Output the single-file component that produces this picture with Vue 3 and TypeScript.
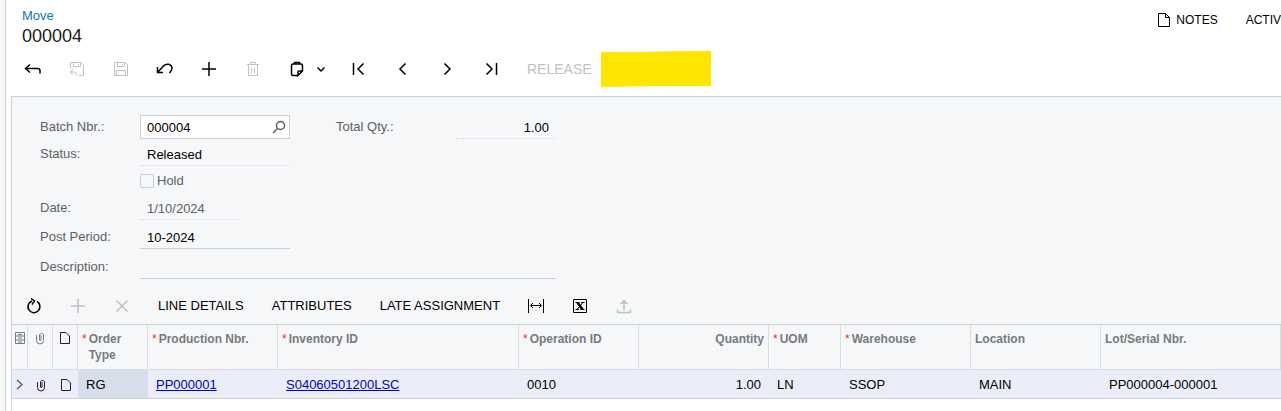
<script setup lang="ts">
import { ref } from 'vue'

interface IconButton {
  label: string
  icon: string
  disabled?: boolean
}

interface Column {
  key: string
  title: string
  required?: boolean
  numeric?: boolean
  link?: boolean
}

const icons: Record<string, string> = {
  back: 'M7 5.500 2.500 9.500 7 13.500M2.500 9.500H14q3 0 3 2v3',
  undo: 'M2.500 8v5.500H8M2.500 13.500 8 7.500c3-4 9-2.500 9 2 0 2-1.500 3-2.500 4.500',
  plus: 'M10 3v14M3 10h14',
  trash: 'M4 5.500h12M7.500 5V3.500h5V5M5.500 6v10.500h9V6M8.500 8.500v6M11.500 8.500v6',
  save: 'M3.500 3.500H14l2.500 2.500v10.500h-13zM6.500 3.500v4h7v-4M11.500 5v1M5.500 16v-4.500h9V16',
  saveClose: 'M3.500 9.500v-6H14l2.500 2.500v10.500H12M6.500 3.500v4h7v-4M11.500 5v1M6 10.500 3 13l3 2.500M3.500 13h4q2 0 2 3.500',
  first: 'M4.500 4v12M14.500 4.500 9 10l5.500 5.500',
  previous: 'M12.500 4.500 7 10l5.500 5.500',
  next: 'M7.500 4.500 13 10l-5.500 5.500',
  last: 'M15.500 4v12M5.500 4.500 11 10l-5.500 5.500',
}

const recordActions: IconButton[] = [
  { label: 'Back', icon: 'back' },
  { label: 'Save and close', icon: 'saveClose', disabled: true },
  { label: 'Save', icon: 'save', disabled: true },
  { label: 'Undo', icon: 'undo' },
  { label: 'Add record', icon: 'plus' },
  { label: 'Delete', icon: 'trash', disabled: true },
]

const navActions: IconButton[] = [
  { label: 'First', icon: 'first' },
  { label: 'Previous', icon: 'previous' },
  { label: 'Next', icon: 'next' },
  { label: 'Last', icon: 'last' },
]

const columns: Column[] = [
  { key: 'orderType', title: 'Order Type', required: true },
  { key: 'production', title: 'Production Nbr.', required: true, link: true },
  { key: 'inventory', title: 'Inventory ID', required: true, link: true },
  { key: 'operation', title: 'Operation ID', required: true },
  { key: 'quantity', title: 'Quantity', numeric: true },
  { key: 'uom', title: 'UOM', required: true },
  { key: 'warehouse', title: 'Warehouse', required: true },
  { key: 'location', title: 'Location' },
  { key: 'lot', title: 'Lot/Serial Nbr.' },
]

const rows: Record<string, string>[] = [
  {
    orderType: 'RG',
    production: 'PP000001',
    inventory: 'S04060501200LSC',
    operation: '0010',
    quantity: '1.00',
    uom: 'LN',
    warehouse: 'SSOP',
    location: 'MAIN',
    lot: 'PP000004-000001',
  },
]

const batch = ref('000004')
const postPeriod = ref('10-2024')
const description = ref('')
</script>

<template>
  <div class="shell">
    <main class="screen">
      <header class="header">
        <div>
          <a class="crumb" href="#">Move</a>
          <h1 class="title">000004</h1>
        </div>
        <nav class="tools">
          <button type="button" class="tool notes">
            <svg width="14" height="16" viewBox="0 0 14 16"><path d="M1.500 1.500h7l4 4v9h-11zM8.500 1.500v4h4" /></svg>
            NOTES
          </button>
          <button type="button" class="tool">ACTIV</button>
        </nav>
      </header>

      <div class="toolbar">
        <button v-for="a in recordActions" :key="a.label" type="button" class="icon-btn" :aria-label="a.label" :disabled="a.disabled">
          <svg width="20" height="20" viewBox="0 0 20 20" :class="{ heavy: !a.disabled }"><path :d="icons[a.icon]" /></svg>
        </button>
        <button type="button" class="icon-btn clipboard" aria-label="Clipboard">
          <svg width="20" height="20" viewBox="0 0 20 20" class="heavy">
            <path d="M11 16.500H6q-1.500 0-1.500-1.500V6.500Q4.500 5 6 5h8q1.500 0 1.500 1.500V12L11 16.500V13q0-1 1-1h3.500" />
            <path d="M7.500 5V3.500h5V5" />
          </svg>
          <svg width="10" height="20" viewBox="0 0 10 20" class="heavy"><path d="M1.500 8.500 5 12l3.500-3.500" /></svg>
        </button>
        <button v-for="a in navActions" :key="a.label" type="button" class="icon-btn" :aria-label="a.label">
          <svg width="20" height="20" viewBox="0 0 20 20" class="heavy"><path :d="icons[a.icon]" /></svg>
        </button>
        <button type="button" class="release" disabled>RELEASE</button>
        <svg class="marker" width="110" height="36" viewBox="0 0 110 36" aria-hidden="true">
          <path d="M0 1 40 1 75 0H110V35L60 35 0 36z" />
        </svg>
      </div>

      <section class="panel">
        <form class="form" @submit.prevent>
          <div class="columns">
            <div class="column">
              <div class="row">
                <label for="batch">Batch Nbr.:</label>
                <div class="lookup">
                  <input id="batch" v-model="batch" type="text" />
                  <button type="button" aria-label="Find batch">
                    <svg width="14" height="14" viewBox="0 0 14 14"><circle cx="8.500" cy="5.500" r="4" /><path d="M5.500 8.500 1 13" /></svg>
                  </button>
                </div>
              </div>
              <div class="row">
                <label for="status">Status:</label>
                <input id="status" class="field dotted" type="text" value="Released" readonly />
              </div>
              <div class="row hold">
                <input id="hold" type="checkbox" disabled />
                <label for="hold">Hold</label>
              </div>
              <div class="row">
                <label for="date">Date:</label>
                <input id="date" class="field dotted short muted" type="text" value="1/10/2024" readonly />
              </div>
              <div class="row spaced">
                <label for="period">Post Period:</label>
                <input id="period" v-model="postPeriod" class="field" type="text" />
              </div>
            </div>
            <div class="column">
              <div class="row total">
                <label for="total">Total Qty.:</label>
                <input id="total" class="field dotted short numeric" type="text" value="1.00" readonly />
              </div>
            </div>
          </div>
          <div class="row wide">
            <label for="description">Description:</label>
            <input id="description" v-model="description" class="field" type="text" />
          </div>
        </form>

        <div class="grid-toolbar">
          <button type="button" class="icon-btn" aria-label="Refresh">
            <svg width="20" height="20" viewBox="0 0 20 20" class="heavy"><path d="M8 5a6 6 0 1 0 5 .5M7 2.500 10.500 5 8 8.500" /></svg>
          </button>
          <button type="button" class="icon-btn" aria-label="Add row" disabled>
            <svg width="20" height="20" viewBox="0 0 20 20" class="heavy"><path :d="icons.plus" /></svg>
          </button>
          <button type="button" class="icon-btn" aria-label="Delete row" disabled>
            <svg width="20" height="20" viewBox="0 0 20 20" class="heavy"><path d="m4.500 4.500 11 11m0-11-11 11" /></svg>
          </button>
          <button type="button" class="text-btn">LINE DETAILS</button>
          <button type="button" class="text-btn">ATTRIBUTES</button>
          <button type="button" class="text-btn">LATE ASSIGNMENT</button>
          <button type="button" class="icon-btn" aria-label="Fit columns">
            <svg width="20" height="20" viewBox="0 0 20 20"><path d="M2.500 3v14M17.500 3v14M5 9.500h10M7 7 4.500 9.500 7 12M13 7l2.500 2.500L13 12" /></svg>
          </button>
          <button type="button" class="icon-btn" aria-label="Export to Excel">
            <svg width="20" height="20" viewBox="0 0 20 20">
              <path d="M3.500 3.500h13v13h-13zM5.500 6.500h4M11 6.500h3.500M5.500 13.500H9M10.500 13.500h4M13 6.500l-6 7" />
              <path class="solid" d="M6.500 6.500h2l5 7h-2z" />
            </svg>
          </button>
          <button type="button" class="icon-btn" aria-label="Upload" disabled>
            <svg width="20" height="20" viewBox="0 0 20 20" class="heavy"><path d="M3.500 13.500v3h13v-3M10 14V5" /><path class="solid" d="m7.500 7 2.500-2.500L12.500 7z" /></svg>
          </button>
        </div>

        <table class="grid">
          <colgroup>
            <col class="w-mark" /><col class="w-icon" /><col class="w-icon" />
            <col v-for="c in columns" :key="c.key" :class="'w-' + c.key" />
          </colgroup>
          <thead>
            <tr>
              <th class="glyph" scope="col" aria-label="Row settings">
                <svg width="12" height="14" viewBox="0 0 12 14"><path d="M1.500 1.500h9v11h-9zM1 5h10M1 9h10M4 3.500h4M4 7h4M4 11h4" /></svg>
              </th>
              <th class="glyph" scope="col" aria-label="Files">
                <svg width="10" height="14" viewBox="0 0 10 14"><path d="M1.500 4v5.500a3.500 3.500 0 0 0 7 0V3.500a2.500 2.500 0 0 0-4 0v5.500q.5 1.500 1.500 0V4" /></svg>
              </th>
              <th class="glyph dark" scope="col" aria-label="Notes">
                <svg width="12" height="14" viewBox="0 0 12 14"><path d="M1.500 1.500H7l3.500 3.500v7.500h-9z" /></svg>
              </th>
              <th v-for="c in columns" :key="c.key" scope="col">
                <div class="head" :class="{ required: c.required, numeric: c.numeric }">
                  <span v-if="c.required" class="star">*</span>
                  <span>{{ c.title }}</span>
                </div>
              </th>
            </tr>
          </thead>
          <tbody>
            <tr v-for="r in rows" :key="r.production">
              <td class="glyph">
                <button type="button" aria-label="Select row">
                  <svg width="10" height="14" viewBox="0 0 10 14" class="heavy"><path d="m2 2 5 4.500L2 11" /></svg>
                </button>
              </td>
              <td class="glyph dark">
                <button type="button" aria-label="Row files">
                  <svg width="10" height="14" viewBox="0 0 10 14"><path d="M1.500 4v5.500a3.500 3.500 0 0 0 7 0V3.500a2.500 2.500 0 0 0-4 0v5.500q.5 1.500 1.500 0V4" /></svg>
                </button>
              </td>
              <td class="glyph dark">
                <button type="button" aria-label="Row notes">
                  <svg width="12" height="14" viewBox="0 0 12 14"><path d="M1.500 1.500H7l3.500 3.500v7.500h-9z" /></svg>
                </button>
              </td>
              <td v-for="(c, i) in columns" :key="c.key" :class="{ numeric: c.numeric, active: i === 0 }">
                <a v-if="c.link" href="#">{{ r[c.key] }}</a>
                <template v-else>{{ r[c.key] }}</template>
              </td>
            </tr>
          </tbody>
        </table>
      </section>
    </main>
  </div>
</template>

<style>
body {
  background: #fff;
}
</style>

<style scoped>
* {
  box-sizing: border-box;
}
.shell {
  display: flex;
  min-height: 100vh;
  padding-left: 5px;
  overflow: hidden;
  background: #f5f6f8;
  color: #000;
  font: 13px/16px "Liberation Sans", Arial, sans-serif;
}
.screen {
  display: flex;
  flex-direction: column;
  flex: 1;
  min-width: 0;
  padding-left: 5px;
  border-left: 1px solid #cdd0d5;
  background: #fff;
}
button,
input {
  margin: 0;
  padding: 0;
  border: 0;
  background: none;
  color: inherit;
  font: inherit;
}
svg {
  display: block;
  fill: none;
  stroke: currentColor;
  stroke-width: 1;
}
svg.heavy {
  stroke-width: 1.5;
}
.solid {
  fill: currentColor;
}
.header {
  display: flex;
  justify-content: space-between;
  padding: 7px 0 0 11px;
}
.crumb {
  display: block;
  padding-top: 1px;
  color: #0f75bd;
  text-decoration: none;
}
.title {
  margin: 0;
  color: #1a1a1a;
  font-size: 18px;
  font-weight: 400;
  line-height: 25px;
}
.tools {
  display: flex;
  align-items: flex-start;
  gap: 28px;
  padding-top: 5px;
  font-size: 12px;
}
.tool {
  display: flex;
  align-items: center;
  gap: 5px;
}
.toolbar {
  display: flex;
  align-items: center;
  height: 40px;
  margin-bottom: 7px;
}
.icon-btn {
  display: flex;
  flex: none;
  align-items: center;
  justify-content: center;
  width: 44px;
  height: 36px;
}
.icon-btn:disabled {
  color: #bfc1c3;
}
.clipboard {
  justify-content: flex-start;
  gap: 9px;
  width: 62px;
  padding-left: 12px;
}
.release {
  padding: 0 9px 0 14px;
  color: #bfc1c3;
  font-size: 14px;
}
.marker {
  fill: #ffe600;
  stroke: none;
}
.panel {
  flex: 1;
  border-top: 1px solid #cdd0d5;
  border-left: 1px solid #cdd0d5;
}
.form {
  padding: 18px 28px 9px;
  background: #f5f7f9;
  color: #5c6166;
}
.columns {
  display: flex;
  gap: 46px;
}
.column {
  display: flex;
  flex-direction: column;
  gap: 3px;
}
.row {
  display: grid;
  grid-template-columns: 100px 150px;
  align-items: center;
  height: 24px;
}
.row.total {
  grid-template-columns: 120px 100px;
}
.row.spaced {
  margin-top: 2px;
}
.row.wide {
  grid-template-columns: 100px 416px;
  margin-top: 6px;
}
.row.hold {
  display: flex;
  gap: 3px;
  padding-left: 100px;
}
.hold input {
  appearance: none;
  width: 14px;
  height: 14px;
  border: 1px solid #c9ccd0;
  border-radius: 2px;
}
.field {
  width: 100%;
  height: 24px;
  padding: 1px 7px 0;
  border-bottom: 1px solid #cdd0d5;
  color: #000;
}
.field.dotted {
  border-bottom: 1px dotted #d5d8dc;
}
.field.short {
  width: 100px;
}
.field.muted {
  color: #5c6166;
}
.numeric {
  text-align: right;
}
.lookup {
  display: flex;
  align-items: center;
  height: 24px;
  padding: 0 3px 0 6px;
  border: 1px solid #cdd0d5;
  background: #fff;
}
.lookup input {
  flex: 1;
  min-width: 0;
  padding-top: 1px;
  color: #000;
}
.lookup svg {
  stroke-width: 1.5;
}
.grid-toolbar {
  display: flex;
  align-items: center;
  height: 36px;
  background: #f5f7f9;
}
.text-btn {
  padding: 0 14px;
  white-space: nowrap;
}
.grid {
  width: 100%;
  border-top: 1px solid #cdd0d5;
  border-collapse: separate;
  border-spacing: 0;
  table-layout: fixed;
}
.w-mark { width: 16px; }
.w-icon { width: 25px; }
.w-orderType { width: 70px; }
.w-production, .w-quantity, .w-warehouse, .w-location { width: 130px; }
.w-inventory { width: 241px; }
.w-operation { width: 120px; }
.w-uom { width: 72px; }
th {
  height: 45px;
  padding: 6px 4px 0;
  border-right: 1px solid #d9dce1;
  border-bottom: 1px solid #d9dce1;
  background: #f5f7f9;
  color: #777b7f;
  font-size: 12px;
  text-align: left;
  vertical-align: top;
}
.head {
  display: flex;
  gap: 2px;
}
.head.numeric {
  justify-content: flex-end;
}
.star {
  color: #e8351e;
  font-weight: 400;
}
td {
  height: 29px;
  padding: 1px 8px 0;
  border-bottom: 1px solid #cdd0d5;
  background: #ebeef9;
  white-space: nowrap;
}
td.active {
  background: #d6deec;
}
td a {
  color: #0000c8;
}
.glyph {
  padding-right: 0;
  padding-left: 0;
}
.glyph svg {
  margin: 0 auto;
}
.glyph button {
  display: block;
  width: 100%;
}
td.glyph {
  color: #5c6166;
}
.glyph.dark,
td.glyph.dark {
  color: #2d1640;
}
</style>
